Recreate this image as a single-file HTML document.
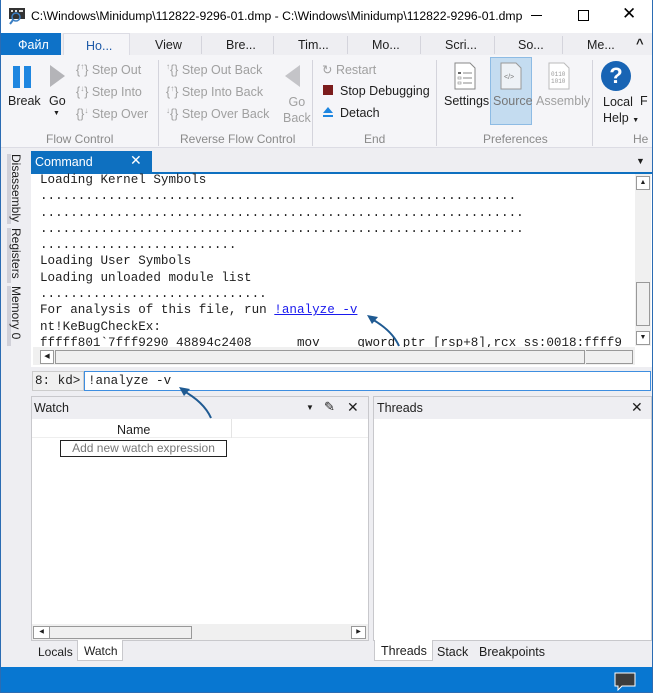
<!DOCTYPE html>
<html><head><meta charset="utf-8">
<style>
*{box-sizing:border-box;margin:0;padding:0}
body{width:653px;height:693px;overflow:hidden;background:#eeeef2;font-family:"Liberation Sans",sans-serif;font-size:12px;color:#1e1e1e;position:relative}
.a{position:absolute}
.mono{font-family:"Liberation Mono",monospace;font-size:12.6px;white-space:pre;line-height:16.3px}
.g{color:#a0a0a0}
.lbl{color:#8a8a8a;font-size:12px}
.sep{position:absolute;width:1px;background:#d4d4dc}
</style></head><body>
<div class="a" style="left:0;top:0;width:653px;height:693px;border:1px solid #2b6cb3;border-top:none;z-index:50;pointer-events:none"></div>
<div class="a" style="left:0;top:0;width:653px;height:33px;background:#fff"></div>
<svg class="a" style="left:8px;top:7px" width="18" height="18"><rect x="1" y="1" width="16" height="11" fill="#333"/><rect x="3" y="3" width="2" height="2" fill="#ddd"/><rect x="7" y="3" width="2" height="2" fill="#ddd"/><rect x="11" y="3" width="4" height="2" fill="#ddd"/><circle cx="8" cy="10" r="4" fill="none" stroke="#3b7fc4" stroke-width="1.5"/><line x1="5" y1="13" x2="2" y2="17" stroke="#3b7fc4" stroke-width="2"/></svg>
<div class="a" style="left:31px;top:9px;font-size:12.2px;color:#000">C:\Windows\Minidump\112822-9296-01.dmp - C:\Windows\Minidump\112822-9296-01.dmp</div>
<div class="a" style="left:531px;top:15px;width:11px;height:1px;background:#000"></div>
<div class="a" style="left:578px;top:10px;width:11px;height:11px;border:1px solid #000"></div>
<div class="a" style="left:622px;top:4px;font-size:17px;color:#000">✕</div>
<div class="a" style="left:0;top:33px;width:653px;height:22px;background:#eeeef2"></div>
<div class="a" style="left:1px;top:33px;width:60px;height:22px;background:#0e72c8;color:#fff;font-size:12.5px;padding:5px 0 0 17px">Файл</div>
<div class="a" style="left:63px;top:33px;width:67px;height:23px;background:#f5f5f8;border:1px solid #dcdce4;border-bottom:none;color:#1e5aa8;font-size:12.5px;padding:5px 0 0 22px">Ho...</div>
<div class="a" style="left:155px;top:38px;font-size:12.5px">View</div>
<div class="a" style="left:226px;top:38px;font-size:12.5px">Bre...</div>
<div class="a" style="left:298px;top:38px;font-size:12.5px">Tim...</div>
<div class="a" style="left:372px;top:38px;font-size:12.5px">Mo...</div>
<div class="a" style="left:445px;top:38px;font-size:12.5px">Scri...</div>
<div class="a" style="left:518px;top:38px;font-size:12.5px">So...</div>
<div class="a" style="left:587px;top:38px;font-size:12.5px">Me...</div>
<div class="a" style="left:636px;top:36px;font-size:13px;font-weight:bold">^</div>
<div class="sep" style="left:201px;top:36px;height:18px"></div>
<div class="sep" style="left:273px;top:36px;height:18px"></div>
<div class="sep" style="left:347px;top:36px;height:18px"></div>
<div class="sep" style="left:420px;top:36px;height:18px"></div>
<div class="sep" style="left:494px;top:36px;height:18px"></div>
<div class="sep" style="left:562px;top:36px;height:18px"></div>
<div class="a" style="left:1px;top:55px;width:651px;height:93px;background:#f5f5f8;border-bottom:1px solid #dcdce4"></div>
<div class="a" style="left:13px;top:66px;width:7px;height:22px;background:#1e86e0"></div>
<div class="a" style="left:24px;top:66px;width:7px;height:22px;background:#1e86e0"></div>
<div class="a" style="left:8px;top:94px;font-size:12.5px">Break</div>
<svg class="a" style="left:49px;top:64px" width="18" height="24"><polygon points="1,1 16,12 1,23" fill="#b4b4b8"/></svg>
<div class="a" style="left:49px;top:94px;font-size:12.5px">Go</div>
<div class="a" style="left:53px;top:110px;font-size:7px">▼</div>
<div class="a g" style="left:76px;top:62px;font-size:12.5px">{<sup style="font-size:8px">↑</sup>} Step Out</div>
<div class="a g" style="left:76px;top:84px;font-size:12.5px">{<sup style="font-size:8px">↓</sup>} Step Into</div>
<div class="a g" style="left:76px;top:106px;font-size:12.5px">{}<sup style="font-size:8px">↓</sup> Step Over</div>
<div class="a lbl" style="left:46px;top:132px">Flow Control</div>
<div class="sep" style="left:158px;top:60px;height:86px"></div>
<div class="a g" style="left:166px;top:62px;font-size:12.5px"><sup style="font-size:8px">↑</sup>{} Step Out Back</div>
<div class="a g" style="left:166px;top:84px;font-size:12.5px">{<sup style="font-size:8px">↑</sup>} Step Into Back</div>
<div class="a g" style="left:166px;top:106px;font-size:12.5px"><sup style="font-size:8px">↓</sup>{} Step Over Back</div>
<svg class="a" style="left:283px;top:64px" width="18" height="24"><polygon points="17,1 2,12 17,23" fill="#c4c4c8"/></svg>
<div class="a g" style="left:283px;top:94px;font-size:12.5px;text-align:center;line-height:16px">Go<br>Back</div>
<div class="a lbl" style="left:180px;top:132px">Reverse Flow Control</div>
<div class="sep" style="left:312px;top:60px;height:86px"></div>
<div class="a g" style="left:322px;top:62px;font-size:12.5px">↻ Restart</div>
<div class="a" style="left:323px;top:85px;width:10px;height:10px;background:#7b1c1c"></div>
<div class="a" style="left:340px;top:84px;font-size:12.5px">Stop Debugging</div>
<svg class="a" style="left:322px;top:106px" width="12" height="12"><polygon points="6,1 11,7 1,7" fill="#1e86e0"/><rect x="1" y="9" width="10" height="2" fill="#1e86e0"/></svg>
<div class="a" style="left:340px;top:106px;font-size:12.5px">Detach</div>
<div class="a lbl" style="left:364px;top:132px">End</div>
<div class="sep" style="left:436px;top:60px;height:86px"></div>
<svg class="a" style="left:454px;top:62px" width="22" height="28"><path d="M1 1h15l5 5v21H1z" fill="#fff" stroke="#888"/><rect x="4" y="10" width="3" height="2" fill="#666"/><line x1="9" y1="11" x2="18" y2="11" stroke="#888"/><rect x="4" y="15" width="3" height="2" fill="none" stroke="#888" stroke-width=".6"/><line x1="9" y1="16" x2="18" y2="16" stroke="#888"/><rect x="4" y="20" width="3" height="2" fill="none" stroke="#888" stroke-width=".6"/><line x1="9" y1="21" x2="18" y2="21" stroke="#888"/></svg>
<div class="a" style="left:444px;top:94px;font-size:12.5px">Settings</div>
<div class="a" style="left:490px;top:57px;width:42px;height:68px;background:#c4dcf0;border:1px solid #8dbbe4"></div>
<svg class="a" style="left:500px;top:62px" width="22" height="28"><path d="M1 1h15l5 5v21H1z" fill="#eef2f6" stroke="#999"/><text x="4" y="17" font-size="7" fill="#777" font-family="Liberation Sans">&lt;/&gt;</text></svg>
<div class="a" style="left:493px;top:94px;font-size:12.5px;color:#777">Source</div>
<svg class="a" style="left:548px;top:62px" width="22" height="28"><path d="M1 1h15l5 5v21H1z" fill="#fff" stroke="#bbb"/><text x="3" y="14" font-size="6" fill="#999" font-family="Liberation Mono">0110</text><text x="3" y="21" font-size="6" fill="#999" font-family="Liberation Mono">1010</text></svg>
<div class="a g" style="left:536px;top:94px;font-size:12.5px">Assembly</div>
<div class="a lbl" style="left:483px;top:132px">Preferences</div>
<div class="sep" style="left:592px;top:60px;height:86px"></div>
<div class="a" style="left:601px;top:61px;width:30px;height:30px;border-radius:50%;background:#1864b4;color:#fff;font-size:22px;font-weight:bold;text-align:center;line-height:30px">?</div>
<div class="a" style="left:603px;top:94px;font-size:12.5px;line-height:16px">Local<br>Help <span style="font-size:7px">▼</span></div>
<div class="a" style="left:640px;top:94px;font-size:12.5px">F</div>
<div class="a lbl" style="left:633px;top:132px">He</div>
<div class="a" style="left:7px;top:154px;width:16px;height:70px;border-left:4px solid #d0d0d8;writing-mode:vertical-rl;font-size:12px">Disassembly</div>
<div class="a" style="left:7px;top:228px;width:16px;height:55px;border-left:4px solid #d0d0d8;writing-mode:vertical-rl;font-size:12px">Registers</div>
<div class="a" style="left:7px;top:286px;width:16px;height:60px;border-left:4px solid #d0d0d8;writing-mode:vertical-rl;font-size:12px">Memory 0</div>
<div class="a" style="left:31px;top:151px;width:121px;height:22px;background:#0e70c0;color:#fff;font-size:12.5px;padding:4px 0 0 4px">Command</div>
<div class="a" style="left:130px;top:152px;color:#fff;font-size:14px">✕</div>
<div class="a" style="left:636px;top:156px;font-size:9px">▼</div>
<div class="a" style="left:31px;top:172px;width:621px;height:2px;background:#0e70c0"></div>
<div class="a" style="left:31px;top:174px;width:621px;height:193px;background:#fff"></div>
<div class="a mono" style="left:40px;top:172px;width:594px;height:175px;overflow:hidden">Loading Kernel Symbols
...............................................................
................................................................
................................................................
..........................
Loading User Symbols
Loading unloaded module list
..............................
For analysis of this file, run <span style="color:#1a1aee;text-decoration:underline">!analyze -v</span>
nt!KeBugCheckEx:
fffff801`7fff9290 48894c2408      mov     qword ptr [rsp+8],rcx ss:0018:ffff9</div>
<div class="a" style="left:31px;top:174px;width:604px;height:4px;background:#fff;opacity:0"></div>
<div class="a" style="left:635px;top:174px;width:16px;height:172px;background:#f0f0f0"></div>
<div class="a" style="left:636px;top:176px;width:14px;height:14px;border:1px solid #999;background:#fff;font-size:7px;text-align:center;line-height:12px">▲</div>
<div class="a" style="left:636px;top:282px;width:14px;height:44px;border:1px solid #999;background:#f0f0f0"></div>
<div class="a" style="left:636px;top:331px;width:14px;height:14px;border:1px solid #999;background:#fff;font-size:7px;text-align:center;line-height:12px">▼</div>
<div class="a" style="left:33px;top:347px;width:602px;height:18px;background:#f0f0f0"></div>
<div class="a" style="left:40px;top:350px;width:14px;height:14px;border:1px solid #999;background:#fff;font-size:7px;line-height:12px;text-align:center">◀</div>
<div class="a" style="left:55px;top:350px;width:530px;height:14px;border:1px solid #999;background:#f0f0f0"></div>
<div class="a" style="left:586px;top:350px;width:47px;height:14px;border:1px solid #999;border-left:none"></div>
<div class="a" style="left:32px;top:371px;width:52px;height:20px;background:#f0f0f0;border:1px solid #ccc"></div>
<div class="a mono" style="left:35px;top:373px">8: kd&gt;</div>
<div class="a" style="left:84px;top:371px;width:567px;height:20px;background:#fff;border:1px solid #3e8ee0"></div>
<div class="a mono" style="left:88px;top:373px">!analyze -v</div>
<svg class="a" style="left:0;top:0;z-index:10" width="653" height="693"><path d="M399 346 Q392 330 370 318" fill="none" stroke="#1f5a92" stroke-width="2"/><polygon points="367,315 378,317 372,324" fill="#1f5a92"/><path d="M211 418 Q204 402 182 390" fill="none" stroke="#1f5a92" stroke-width="2"/><polygon points="179,387 190,389 184,396" fill="#1f5a92"/></svg>
<div class="a" style="left:31px;top:396px;width:338px;height:245px;border:1px solid #c8c8cc;background:#fff"></div>
<div class="a" style="left:32px;top:397px;width:336px;height:22px;background:#eeeef2"></div>
<div class="a" style="left:34px;top:401px;font-size:12.5px">Watch</div>
<div class="a" style="left:306px;top:403px;font-size:8px">▼</div>
<div class="a" style="left:324px;top:399px;font-size:13px">✎</div>
<div class="a" style="left:347px;top:399px;font-size:14px">✕</div>
<div class="a" style="left:32px;top:419px;width:336px;height:19px;border-bottom:1px solid #eee"></div>
<div class="a" style="left:231px;top:419px;width:1px;height:19px;background:#e4e4e4"></div>
<div class="a" style="left:117px;top:423px;font-size:12.5px">Name</div>
<div class="a" style="left:60px;top:440px;width:167px;height:17px;border:1px solid #222;font-size:12px;color:#777;text-align:center;line-height:15px">Add new watch expression</div>
<div class="a" style="left:32px;top:624px;width:336px;height:16px;background:#f0f0f0"></div>
<div class="a" style="left:33px;top:626px;width:17px;height:13px;border:1px solid #999;background:#fff;font-size:6px;line-height:11px;text-align:center">◀</div>
<div class="a" style="left:50px;top:626px;width:142px;height:13px;border:1px solid #999;border-left:none"></div>
<div class="a" style="left:351px;top:626px;width:15px;height:13px;border:1px solid #999;background:#fff;font-size:6px;line-height:11px;text-align:center">▶</div>
<div class="a" style="left:38px;top:645px;font-size:12px">Locals</div>
<div class="a" style="left:77px;top:640px;width:46px;height:21px;background:#fff;border:1px solid #c8c8cc;border-top:none;font-size:12px;padding:4px 0 0 6px">Watch</div>
<div class="a" style="left:373px;top:396px;width:279px;height:245px;border:1px solid #c8c8cc;background:#fff"></div>
<div class="a" style="left:374px;top:397px;width:277px;height:22px;background:#eeeef2"></div>
<div class="a" style="left:377px;top:401px;font-size:12.5px">Threads</div>
<div class="a" style="left:631px;top:399px;font-size:14px">✕</div>
<div class="a" style="left:374px;top:640px;width:59px;height:21px;background:#fff;border:1px solid #c8c8cc;border-top:none;font-size:12.5px;padding:4px 0 0 6px">Threads</div>
<div class="a" style="left:437px;top:645px;font-size:12.5px">Stack</div>
<div class="a" style="left:479px;top:645px;font-size:12.5px">Breakpoints</div>
<div class="a" style="left:0;top:667px;width:653px;height:26px;background:#0877d1"></div>
<svg class="a" style="left:614px;top:672px" width="22" height="19"><path d="M1 1h20v13H8l-4 4v-4H1z" fill="#3c3c3c" stroke="#fff" stroke-width="1"/></svg>
</body></html>
